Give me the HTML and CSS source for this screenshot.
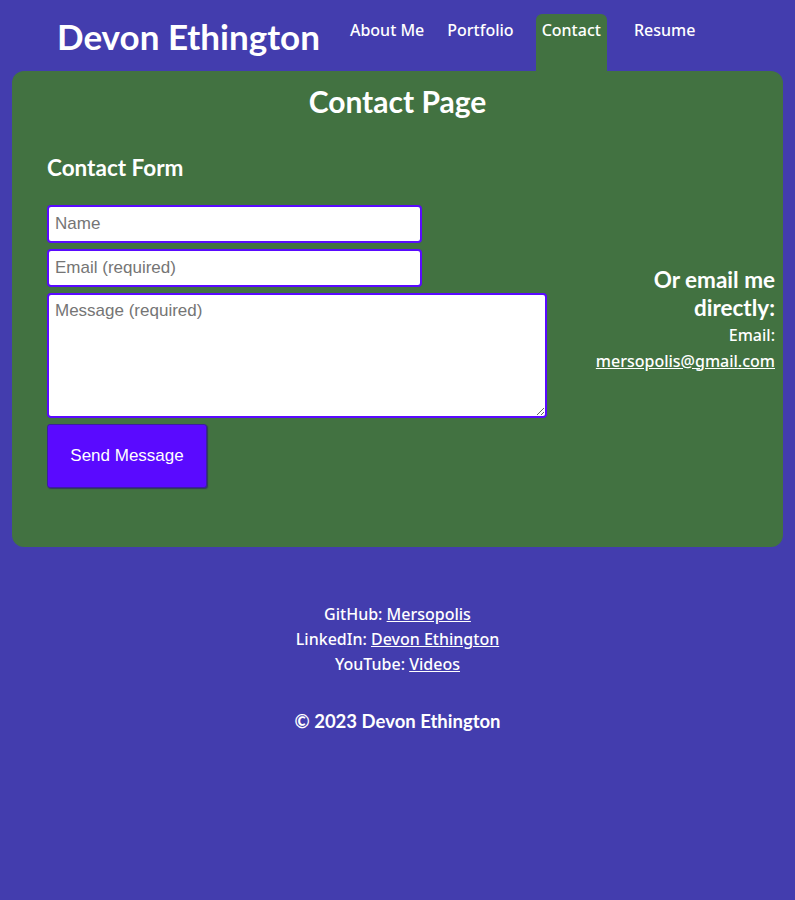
FILE: index.html
```html
<!DOCTYPE html>
<html lang="en">
<head>
<meta charset="utf-8">
<title>Devon Ethington - Contact</title>
<link rel="stylesheet" href="styles.css">
</head>
<body>
<header class="site-header">
  <h1 class="site-title">Devon Ethington</h1>
  <nav class="site-nav">
    <a class="nav-link" href="#">About Me</a>
    <a class="nav-link" href="#">Portfolio</a>
    <a class="nav-link active" href="#">Contact</a>
    <a class="nav-link" href="#">Resume</a>
  </nav>
</header>
<main class="card">
  <h2 class="page-title">Contact Page</h2>
  <div class="card-body">
    <section class="form-section">
      <h3 class="form-title">Contact Form</h3>
      <form class="contact-form">
        <input class="field short" type="text" placeholder="Name">
        <input class="field short" type="email" placeholder="Email (required)">
        <textarea class="field message" placeholder="Message (required)"></textarea>
        <button class="send-btn" type="button">Send Message</button>
      </form>
    </section>
    <aside class="direct">
      <h3 class="direct-title">Or email me directly:</h3>
      <p class="direct-line">Email:</p>
      <a class="direct-link" href="#">mersopolis@gmail.com</a>
    </aside>
  </div>
</main>
<footer class="site-footer">
  <p class="footer-line">GitHub: <a href="#">Mersopolis</a></p>
  <p class="footer-line">LinkedIn: <a href="#">Devon Ethington</a></p>
  <p class="footer-line">YouTube: <a href="#">Videos</a></p>
  <p class="copyright">© 2023 Devon Ethington</p>
</footer>
</body>
</html>
```
FILE: styles.css
```css
* { box-sizing: border-box; }
html, body { margin: 0; padding: 0; }
body {
  background: #433dae;
  color: #fff;
  font-family: "Trebuchet MS", "Noto Sans", sans-serif;
  font-weight: 500;
  min-height: 900px;
}
.site-header {
  display: flex;
  align-items: flex-start;
  height: 71px;
  padding-left: 57px;
}
.site-title {
  margin: 14px 0 0 0;
  font-family: Lato, sans-serif;
  font-weight: 700;
  font-size: 35px;
  line-height: 44px;
}
.site-nav {
  display: flex;
  align-self: stretch;
  margin-left: 24px;
  padding-top: 14px;
  gap: 11px;
}
.nav-link {
  color: #fff;
  text-decoration: none;
  font-size: 16px;
  padding: 4px 6px 0 6px;
  line-height: 24px;
  border-radius: 6px 6px 0 0;
}
.nav-link.active {
  background: #427241;
  margin-left: 5px;
  margin-right: 10px;
}
.card {
  margin: 0 12px;
  background: #427241;
  border-radius: 12px;
  padding: 12px 8px 27px 35px;
}
.page-title {
  margin: 0;
  text-align: center;
  font-family: Lato, sans-serif;
  font-weight: 700;
  font-size: 30px;
  line-height: 36px;
  padding-right: 27px;
}
.card-body {
  display: flex;
  align-items: center;
  justify-content: space-between;
}
.form-section { padding: 35px 0 32px 0; }
.form-title {
  margin: 0 0 23px 0;
  font-family: Lato, sans-serif;
  font-weight: 700;
  font-size: 22.5px;
  line-height: 28px;
}
.contact-form {
  display: flex;
  flex-direction: column;
  align-items: flex-start;
  gap: 6px;
}
.field {
  border: 2px solid #5a0aff;
  border-radius: 4px;
  background: #fff;
  font-family: "Liberation Sans", Arial, sans-serif;
  font-size: 17px;
  padding: 6px 6px;
  color: #222;
}
.field::placeholder { color: #757575; }
.short { width: 375px; height: 38px; }
.message { width: 500px; height: 125px; resize: vertical; }
.send-btn {
  width: 160px;
  height: 64px;
  background: #5a0aff;
  color: #fff;
  border: 1px solid #3a1f9e;
  border-radius: 3px;
  box-shadow: 1px 1px 1px rgba(40, 20, 110, 0.6);
  font-family: "Liberation Sans", Arial, sans-serif;
  font-size: 17px;
}
.direct {
  width: 190px;
  text-align: right;
}
.direct-title {
  margin: 0;
  font-family: Lato, sans-serif;
  font-weight: 700;
  font-size: 22.5px;
  line-height: 28px;
}
.direct-line {
  margin: 0;
  font-size: 16px;
  line-height: 26px;
}
.direct-link {
  color: #fff;
  font-size: 16px;
  line-height: 26px;
}
.site-footer {
  padding-top: 55px;
  text-align: center;
}
.footer-line {
  margin: 0;
  font-size: 16px;
  line-height: 25px;
}
.footer-line a { color: #fff; }
.copyright {
  margin: 32px 0 0 0;
  font-family: Lato, sans-serif;
  font-weight: 700;
  font-size: 18.5px;
  line-height: 24px;
}
```
